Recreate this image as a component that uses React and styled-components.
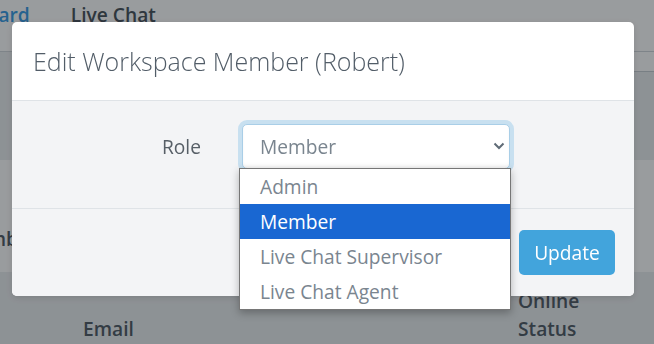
import React from "react";
import styled, { createGlobalStyle } from "styled-components";

const GlobalStyle = createGlobalStyle`
  html, body { margin: 0; padding: 0; }
  body {
    font-family: "Open Sans", "Liberation Sans", sans-serif;
    background: #eceff1;
    overflow: hidden;
  }
  * { box-sizing: border-box; }
`;

const Page = styled.div`
  width: calc(100vw + 72px);
  height: 100vh;
  margin-left: -72px;
  background: #eceff1;
  overflow: hidden;
`;

const Nav = styled.nav`
  height: 52px;
  background: #fff;
  border-bottom: 1px solid #d3d8dc;
  display: flex;
  align-items: flex-start;
  gap: 41px;
  padding-top: 1px;
`;

const NavLink = styled.span`
  font-size: 19.2px;
  line-height: 28px;
  font-weight: 600;
  color: ${(p) => (p.$active ? "#3f9fe6" : "#4e5760")};
  white-space: nowrap;
`;

const SubBar = styled.div`
  height: 20px;
  display: flex;
  justify-content: flex-end;
`;

const SubTab = styled.div`
  width: 200px;
  background: #fff;
  border-bottom: 1px solid #c9cfd4;
`;

const Main = styled.main`
  padding-top: 88px;
`;

const Card = styled.section`
  height: 112px;
  background: #fff;
  display: flex;
  align-items: flex-end;
  padding: 0 0 19px 31px;
`;

const CardTitle = styled.h2`
  margin: 0;
  font-size: 19.2px;
  line-height: 28px;
  font-weight: 600;
  color: #56606a;
`;

const HeadRow = styled.div`
  display: flex;
  align-items: flex-end;
  padding-top: 15px;
`;

const HeadCell = styled.div`
  width: ${(p) => p.$w};
  flex: none;
  font-size: 19.2px;
  line-height: 28px;
  font-weight: 600;
  color: #56606a;
`;

const Backdrop = styled.div`
  position: fixed;
  inset: 0;
  background: rgba(0, 8, 13, 0.4);
  padding: 22px 0 0 12px;
`;

const Modal = styled.div`
  width: 622px;
  background: #fff;
  border-radius: 5px;
  box-shadow: 0 2px 6px rgba(0, 0, 0, 0.12);
`;

const Header = styled.header`
  height: 79px;
  display: flex;
  align-items: center;
  padding: 0 21px;
  border-bottom: 1px solid #dfe3e7;
`;

const Title = styled.h5`
  margin: 0;
  font-size: 25px;
  font-weight: 300;
  color: #525d68;
`;

const Body = styled.div`
  background: #f3f4f6;
  padding: 23px 0 39px;
`;

const FieldRow = styled.div`
  display: flex;
  align-items: center;
`;

const Label = styled.label`
  width: 189px;
  margin-right: 41px;
  text-align: right;
  font-size: 19.2px;
  color: #575f67;
`;

const SelectWrap = styled.div`
  position: relative;
  width: 268px;
`;

const SelectBox = styled.div`
  height: 45px;
  border: 1px solid #a9cee7;
  border-radius: 5px;
  box-shadow: 0 0 0 4px #c8e0f0, inset 0 -2px 3px rgba(0, 0, 0, 0.04);
  background: #fff;
  display: flex;
  align-items: center;
  justify-content: space-between;
  padding: 0 4px 1px 17px;
  font-size: 19.2px;
  color: #7a858f;
`;

const OptionList = styled.ul`
  position: absolute;
  top: calc(100% - 1px);
  left: -3px;
  width: 272px;
  margin: 0;
  padding: 0;
  list-style: none;
  background: #fff;
  border: 1px solid #767676;
  box-shadow: 0 3px 8px rgba(0, 0, 0, 0.28);
  z-index: 5;
`;

const Option = styled.li`
  height: 35px;
  display: flex;
  align-items: center;
  padding-left: 20px;
  font-size: 19.2px;
  color: ${(p) => (p.$selected ? "#fff" : "#7a858f")};
  background: ${(p) => (p.$selected ? "#1967d2" : "#fff")};
`;

const Footer = styled.footer`
  background: #f3f4f6;
  border-top: 1px solid #dfe3e7;
  border-radius: 0 0 5px 5px;
  display: flex;
  justify-content: flex-end;
  padding: 21px 19px 21px;
`;

const UpdateButton = styled.button`
  height: 45px;
  width: 96px;
  border: none;
  border-radius: 5px;
  background: #42a4dc;
  color: #fff;
  font-family: "Open Sans", "Liberation Sans", sans-serif;
  font-size: 19.2px;
  font-weight: 400;
  padding: 0;
`;

const Chevron = () => (
  <svg width="12" height="8" viewBox="0 0 12 8" aria-hidden="true">
    <path d="M1.5 1.5 L6 6 L10.5 1.5" fill="none" stroke="#5f6b76" strokeWidth="2" />
  </svg>
);

const roles = ["Admin", "Member", "Live Chat Supervisor", "Live Chat Agent"];

export default function App() {
  return (
    <>
      <GlobalStyle />
      <Page>
        <Nav>
          <NavLink $active>Dashboard</NavLink>
          <NavLink>Live Chat</NavLink>
        </Nav>
        <SubBar>
          <SubTab />
        </SubBar>
        <Main>
          <Card>
            <CardTitle>Members</CardTitle>
          </Card>
          <HeadRow>
            <HeadCell $w="155px" />
            <HeadCell $w="435px">Email</HeadCell>
            <HeadCell $w="110px">Online Status</HeadCell>
          </HeadRow>
        </Main>
      </Page>
      <Backdrop>
        <Modal>
          <Header>
            <Title>Edit Workspace Member (Robert)</Title>
          </Header>
          <Body>
            <FieldRow>
              <Label>Role</Label>
              <SelectWrap>
                <SelectBox>
                  <span>Member</span>
                  <Chevron />
                </SelectBox>
                <OptionList>
                  {roles.map((r) => (
                    <Option key={r} $selected={r === "Member"}>
                      {r}
                    </Option>
                  ))}
                </OptionList>
              </SelectWrap>
            </FieldRow>
          </Body>
          <Footer>
            <UpdateButton>Update</UpdateButton>
          </Footer>
        </Modal>
      </Backdrop>
    </>
  );
}
